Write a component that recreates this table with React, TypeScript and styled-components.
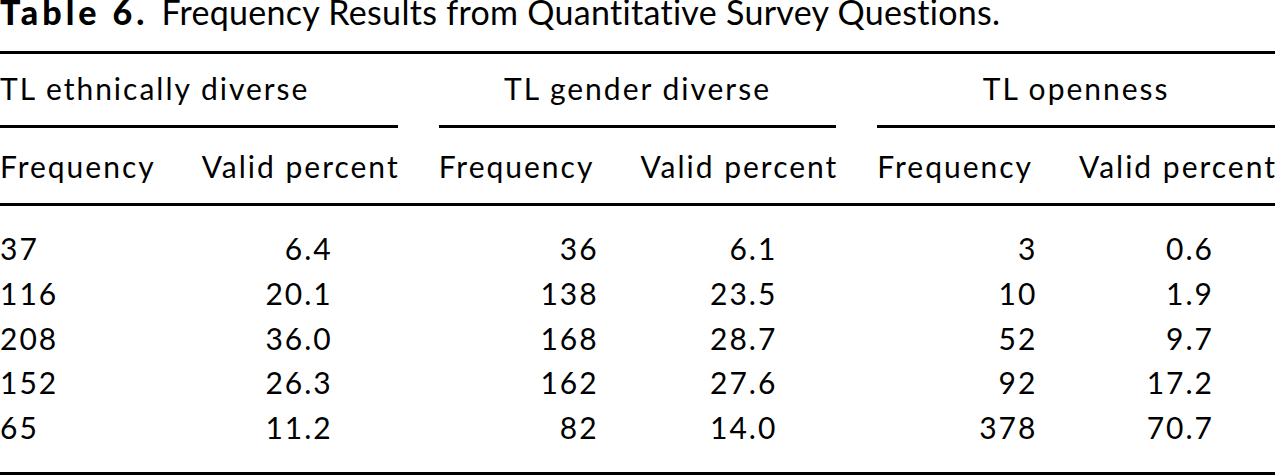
import React from 'react'
import styled, { createGlobalStyle } from 'styled-components'

const GlobalStyle = createGlobalStyle`
  html, body {
    margin: 0;
    padding: 0;
    background: #ffffff;
  }
  body {
    font-family: Lato, "Open Sans", sans-serif;
    color: #000000;
    overflow: hidden;
  }
`

type Align = 'left' | 'right'

interface Group {
  title: string
  titleAlign: 'left' | 'center'
  freqAlign: Align
  padRight: number
  rows: [string, string][]
}

const groups: Group[] = [
  {
    title: 'TL ethnically diverse',
    titleAlign: 'left',
    freqAlign: 'left',
    padRight: 67,
    rows: [['37', '6.4'], ['116', '20.1'], ['208', '36.0'], ['152', '26.3'], ['65', '11.2']],
  },
  {
    title: 'TL gender diverse',
    titleAlign: 'center',
    freqAlign: 'right',
    padRight: 61,
    rows: [['36', '6.1'], ['138', '23.5'], ['168', '28.7'], ['162', '27.6'], ['82', '14.0']],
  },
  {
    title: 'TL openness',
    titleAlign: 'center',
    freqAlign: 'right',
    padRight: 63,
    rows: [['3', '0.6'], ['10', '1.9'], ['52', '9.7'], ['92', '17.2'], ['378', '70.7']],
  },
]

const App: React.FC = () => {
  return (
    <StyledPage>
      <GlobalStyle />
      <StyledCaption>
        <b>Table 6.</b>Frequency Results from Quantitative Survey Questions.
      </StyledCaption>
      <StyledRule />

      <StyledGroupRow>
        {groups.map((g) => (
          <StyledGroupHead key={g.title} align={g.titleAlign}>
            <span>{g.title}</span>
            <StyledSpanRule />
          </StyledGroupHead>
        ))}
      </StyledGroupRow>

      <StyledGroupRow className="sub">
        {groups.map((g) => (
          <StyledPair key={g.title}>
            <StyledCell align="left">Frequency</StyledCell>
            <StyledCell align="right">Valid percent</StyledCell>
          </StyledPair>
        ))}
      </StyledGroupRow>
      <StyledRule />

      <StyledBody>
        {[0, 1, 2, 3, 4].map((i) => (
          <StyledGroupRow key={i} className="data">
            {groups.map((g) => (
              <StyledPair key={g.title}>
                <StyledCell align={g.freqAlign}>{g.rows[i][0]}</StyledCell>
                <StyledCell align="right" style={{ paddingRight: g.padRight }}>
                  {g.rows[i][1]}
                </StyledCell>
              </StyledPair>
            ))}
          </StyledGroupRow>
        ))}
      </StyledBody>
      <StyledRule />
    </StyledPage>
  )
}

const StyledPage = styled.div`
  width: 1275px;
  height: 475px;
  overflow: hidden;
  font-size: 30px;
  line-height: 35px;
  letter-spacing: 2px;
`

const StyledCaption = styled.p`
  margin: 0;
  padding: 0 0 27px;
  font-size: 34px;
  line-height: 24px;
  letter-spacing: 0.3px;
  white-space: nowrap;
  b {
    font-weight: 900;
    letter-spacing: 4px;
    margin-right: 13px;
  }
`

const StyledRule = styled.div`
  height: 3px;
  background: #000000;
`

const StyledGroupRow = styled.div`
  display: grid;
  grid-template-columns: repeat(3, minmax(0, 1fr));
  column-gap: 41px;
  padding-top: 17px;
  &.sub {
    padding: 21px 0 19px;
  }
  &.data {
    padding: 0;
    line-height: 44.8px;
  }
`

const StyledGroupHead = styled.div<{ align: 'left' | 'center' }>`
  display: flex;
  flex-direction: column;
  text-align: ${(p) => p.align};
  white-space: nowrap;
  span {
    display: block;
    padding-bottom: 19px;
  }
`

const StyledSpanRule = styled.div`
  height: 3px;
  background: #000000;
`

const StyledPair = styled.div`
  display: grid;
  grid-template-columns: 158px 1fr;
  white-space: nowrap;
`

const StyledCell = styled.div<{ align: Align }>`
  text-align: ${(p) => p.align};
  margin-right: ${(p) => (p.align === 'right' ? '-2px' : '0')};
`

const StyledBody = styled.div`
  padding: 20px 0 22px;
`

export default App
